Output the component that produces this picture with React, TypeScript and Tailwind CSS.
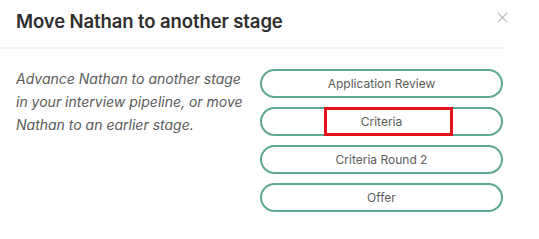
import React from 'react';

const stages = ['Application Review', 'Criteria', 'Criteria Round 2', 'Offer'];

export default function App() {
  return (
    <div className="w-[539px] h-[239px] bg-white font-['Inter',sans-serif]">
      <div className="w-[508px] flex justify-between items-start pl-4 pt-[9px] h-[47px]">
        <h2 className="text-[18.5px] leading-[24px] font-semibold text-[#2e2e2e] tracking-[-0.1px]">
          Move Nathan to another stage
        </h2>
        <svg width="11" height="11" viewBox="0 0 12 12" className="mt-[3px]">
          <path d="M1 1L11 11M11 1L1 11" stroke="#b5b5b5" strokeWidth="1.2" />
        </svg>
      </div>
      <div className="w-[503px] h-[2px] bg-[#f1f1f1]" />
      <div className="flex pt-[20px]">
        <p className="w-[260px] shrink-0 pl-4 pr-[16px] mt-[-2px] text-[14px] leading-[23px] italic text-[#5a5a5a]">
          Advance Nathan to another stage in your interview pipeline, or move Nathan to an earlier stage.
        </p>
        <div className="w-[243px] shrink-0 flex flex-col gap-[9px]">
          {stages.map((s) => (
            <div key={s} className="relative">
              <button className="w-full h-[29px] border-2 border-[#5fa891] rounded-full text-[12px] text-[#5c5c5c] bg-white">
                {s}
              </button>
              {s === 'Criteria' && (
                <div className="absolute top-0 left-[64px] w-[129px] h-[29px] border-[3px] border-[#e5121d]" />
              )}
            </div>
          ))}
        </div>
      </div>
    </div>
  );
}
